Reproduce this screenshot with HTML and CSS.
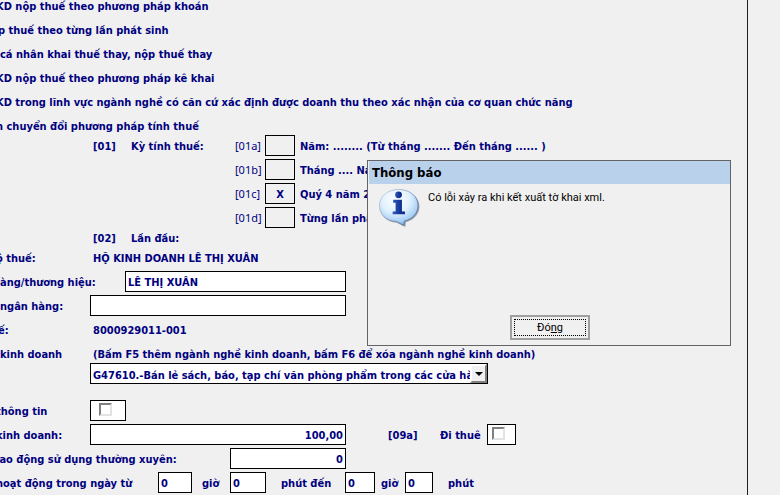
FILE: index.html
```html
<!DOCTYPE html>
<html lang="vi">
<head>
<meta charset="utf-8">
<title>Tờ khai thuế</title>
<link rel="stylesheet" href="styles.css">
</head>
<body>
<main class="form">
  <div class="intro">
    <p class="cut">KD nộp thuế theo phương pháp khoán</p>
    <p class="edge">p thuế theo từng lần phát sinh</p>
    <p>cá nhân khai thuế thay, nộp thuế thay</p>
    <p class="cut">KD nộp thuế theo phương pháp kê khai</p>
    <p class="cut">KD trong lĩnh vực ngành nghề có căn cứ xác định được doanh thu theo xác nhận của cơ quan chức năng</p>
    <p class="cut">n chuyển đổi phương pháp tính thuế</p>
  </div>

  <div class="period">
    <span class="code">[01]</span>
    <span class="period-title">Kỳ tính thuế:</span>
    <div class="options">
      <label class="key" for="p1">[01a]</label><input class="box" id="p1"><span>Năm: ........ (Từ tháng ....... Đến tháng ...... )</span>
      <label class="key" for="p2">[01b]</label><input class="box" id="p2"><span>Tháng .... Năm</span>
      <label class="key" for="p3">[01c]</label><input class="box" id="p3" value="X"><span>Quý 4 năm 2021</span>
      <label class="key" for="p4">[01d]</label><input class="box" id="p4"><span>Từng lần phát sinh</span>
    </div>
  </div>

  <div class="row first-time"><span class="code">[02]</span><span>Lần đầu:</span></div>

  <div class="fields">
    <div class="row"><span class="label cut">ộ thuế:</span><span class="value">HỘ KINH DOANH LÊ THỊ XUÂN</span></div>
    <div class="row"><label class="label brand" for="brand">àng/thương hiệu:</label><input class="field brand-field" id="brand" value="LÊ THỊ XUÂN"></div>
    <div class="row"><label class="label" for="bank">ngân hàng:</label><input class="field wide" id="bank"></div>
    <div class="row"><span class="label edge">ế:</span><span class="value">8000929011-001</span></div>
    <div class="row"><label class="label" for="trade">kinh doanh</label><span class="value">(Bấm F5 thêm ngành nghề kinh doanh, bấm F6 để xóa ngành nghề kinh doanh)</span></div>
  </div>

  <div class="row trade-row">
    <div class="combo">
      <select id="trade"><option>G47610.-Bán lẻ sách, báo, tạp chí văn phòng phẩm trong các cửa hàng chuyên doanh</option></select>
      <span class="arrow" aria-hidden="true"></span>
    </div>
  </div>

  <div class="fields">
    <div class="row"><label class="label cut" for="info">thông tin</label><span class="tick tick-info"><input type="checkbox" id="info"></span></div>
    <div class="row">
      <label class="label cut" for="area">kinh doanh:</label><input class="field wide number" id="area" value="100,00">
      <span class="code rent-code">[09a]</span><label class="rent" for="rent">Đi thuê</label><span class="tick tick-rent"><input type="checkbox" id="rent"></span>
    </div>
    <div class="row"><label class="label staff cut" for="staff">lao động sử dụng thường xuyên:</label><input class="field staff-field number" id="staff" value="0"></div>
    <div class="row">
      <label class="label hours cut" for="h1">hoạt động trong ngày từ</label><input class="field h1" id="h1" value="0">
      <label class="unit u1" for="h1">giờ</label><input class="field m1" id="m1" value="0">
      <label class="unit u2" for="m1">phút đến</label><input class="field h2" id="h2" value="0">
      <label class="unit u3" for="h2">giờ</label><input class="field m2" id="m2" value="0">
      <label class="unit u4" for="m2">phút</label>
    </div>
  </div>
</main>

<section class="dialog" role="alertdialog" aria-labelledby="dlg-title" aria-describedby="dlg-text">
  <h1 id="dlg-title">Thông báo</h1>
  <div class="message">
    <svg class="icon" viewBox="0 0 44 42" aria-hidden="true">
      <defs>
        <radialGradient id="bubble" cx="42%" cy="28%" r="75%">
          <stop offset="0" stop-color="#ffffff"/>
          <stop offset=".5" stop-color="#e0f0fd"/>
          <stop offset=".82" stop-color="#a6cff5"/>
          <stop offset="1" stop-color="#6a9fdc"/>
        </radialGradient>
        <linearGradient id="rim" x1="0" y1="0" x2="1" y2="1">
          <stop offset="0" stop-color="#d3dae3"/>
          <stop offset=".5" stop-color="#88a0c4"/>
          <stop offset="1" stop-color="#3f5580"/>
        </linearGradient>
        <linearGradient id="letter" x1="0" y1="0" x2="1" y2="0">
          <stop offset="0" stop-color="#2b5bc4"/>
          <stop offset="1" stop-color="#061d78"/>
        </linearGradient>
      </defs>
      <path d="M22.500 3C34 3 42.500 9.500 42.500 19C42.500 27 36.500 33 28.500 35L28 40L19 35.500C9 35 2.500 28.500 2.500 19.500C2.500 9.500 11 3 22.500 3Z" fill="#7d8590" opacity=".7"/>
      <path d="M21 1.500C32.500 1.500 41 8.500 41 18C41 26.500 35 32 27 34L26.500 38.500L19 34.300C8.500 34 1.500 27.500 1.500 18C1.500 8.500 10 1.500 21 1.500Z" fill="url(#bubble)" stroke="url(#rim)"/>
      <circle cx="21" cy="7" r="3.500" fill="url(#letter)"/>
      <path d="M15.500 12H24.500V24H27.500V27H15V24H18V15H15.500Z" fill="url(#letter)"/>
    </svg>
    <p id="dlg-text">Có lỗi xảy ra khi kết xuất tờ khai xml.</p>
  </div>
  <button type="button" class="close"><span>Đó<u>ng</u></span></button>
</section>
</body>
</html>
```
FILE: styles.css
```css
* { box-sizing: border-box; }

body {
  margin: 0;
  background: #f0f0f0;
  color: #000080;
  font: bold 11px/18px "DejaVu Sans Condensed", "DejaVu Sans", sans-serif;
  overflow: hidden;
  position: relative;
}

p, h1 { margin: 0; }

input, select, button {
  font: inherit;
  color: inherit;
  margin: 0;
  border-radius: 0;
  outline: 0;
}

.form {
  min-height: 100vh;
  margin-right: 32px;
  border-right: 1px solid #202020;
  white-space: nowrap;
  display: flow-root;
}

.intro {
  display: flex;
  flex-direction: column;
  gap: 6px;
  margin-top: -2px;
}

.cut { text-indent: -4px; }
.edge { text-indent: -2px; }

.period {
  display: flex;
  margin-top: -1px;
  padding-left: 93px;
  line-height: 23px;
}

.code { flex: none; width: 38px; }
.period-title { flex: none; width: 104px; }

.options {
  display: grid;
  grid-template-columns: 30px 30px auto;
  grid-auto-rows: 21px;
  row-gap: 3px;
}
.options span { padding-left: 5px; }

.key {
  font-family: "Noto Sans", sans-serif;
  font-weight: normal;
  line-height: 21px;
}

.box {
  width: 30px;
  height: 21px;
  padding: 1px 0 0;
  border: 1px solid #000;
  background: transparent;
  text-align: center;
}

.row {
  display: flex;
  height: 21px;
  line-height: 23px;
}

.first-time { padding-left: 93px; height: 19px; line-height: 21px; }

.fields {
  display: flex;
  flex-direction: column;
  gap: 3px;
}

.label { flex: none; width: 90px; }
.value { padding-left: 3px; }

.field {
  flex: none;
  height: 21px;
  padding: 1px 2px 0;
  border: 1px solid #000;
  background: #fff;
}
.number { text-align: right; }
.wide { width: 256px; }
.brand { width: 125px; }
.brand-field { width: 221px; }
.staff { width: 230px; }
.staff-field { width: 116px; }
.hours { width: 158px; }
.h1 { width: 34px; }
.m1 { width: 36px; }
.h2 { width: 30px; }
.m2 { width: 28px; }

.unit { flex: none; }
.u1 { width: 38px; padding-left: 10px; }
.u2 { width: 79px; padding-left: 15px; }
.u3 { width: 30px; padding-left: 6px; }
.u4 { padding-left: 15px; }

.rent-code { width: 94px; padding-left: 42px; }
.rent { width: 47px; }

.tick {
  display: flex;
  height: 21px;
  border: 1px solid #000;
  background: #fff;
}
.tick-info { width: 36px; padding: 2px 8px; }
.tick-rent { width: 29px; padding: 2px 4px; }

.tick input {
  appearance: none;
  width: 13px;
  height: 13px;
  border: 2px solid;
  border-color: #808080 #e3e3e3 #e3e3e3 #808080;
  background: #fff;
}

.trade-row { padding-left: 90px; margin: -1px 0 16px; }

.combo {
  position: relative;
  width: 398px;
  height: 21px;
  border: 1px solid #000;
  background: #fff;
}
.combo select {
  appearance: none;
  display: block;
  width: 379px;
  height: 19px;
  padding: 0 0 0 2px;
  border: 0;
  background: transparent;
}
.arrow {
  position: absolute;
  top: 0;
  right: 0;
  width: 17px;
  height: 19px;
  border: 2px solid;
  border-color: #fff #808080 #808080 #fff;
  background: #f0f0f0;
  pointer-events: none;
}
.arrow::after {
  content: "";
  position: absolute;
  left: 3px;
  top: 6px;
  border: 4px solid transparent;
  border-top-color: #000;
  border-bottom: 0;
}

.dialog {
  position: absolute;
  left: 367px;
  top: 160px;
  width: 364px;
  height: 186px;
  border: 1px solid #646464;
  background: #f0f0f0;
  color: #000;
  font-family: Roboto, "Noto Sans", sans-serif;
  font-weight: normal;
}
.dialog h1 {
  height: 23px;
  margin-left: 1px;
  padding-left: 3px;
  background: #b9d1ea;
  font-family: "DejaVu Sans Condensed", "DejaVu Sans", sans-serif;
  font-size: 13px;
  line-height: 23px;
}

.message {
  display: flex;
  gap: 7px;
  height: 131px;
  padding: 4px 10px;
}
.icon { flex: none; width: 43px; height: 41px; }
.message p { padding-top: 1px; }

.close {
  display: block;
  width: 80px;
  height: 25px;
  margin-left: 142px;
  padding: 2px;
  border: 2px solid #a0a0a0;
  background: #f0f0f0;
}
.close span {
  display: block;
  height: 17px;
  border: 1px dotted #000;
  line-height: 16px;
}
```
